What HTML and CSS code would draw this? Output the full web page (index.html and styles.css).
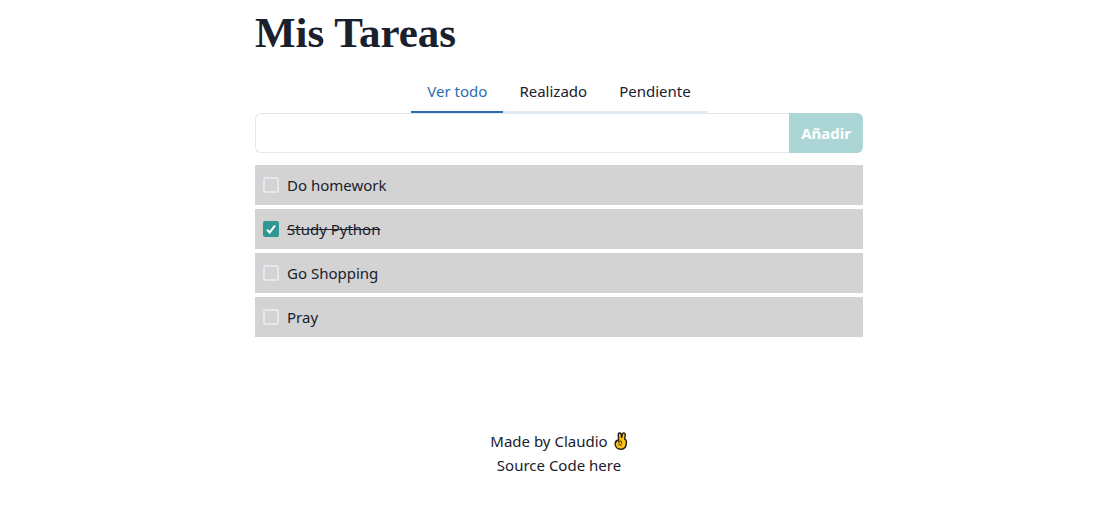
FILE: index.html
```
<!DOCTYPE html>
<html lang="es">
<head>
<meta charset="utf-8">
<meta name="viewport" content="width=device-width, initial-scale=1">
<title>Mis Tareas</title>
<link rel="stylesheet" href="styles.css">
</head>
<body>
<main class="container">
  <h1 class="title">Mis Tareas</h1>
  <div class="tabs" role="tablist">
    <button class="tab tab-active" type="button" role="tab" aria-selected="true">Ver todo</button>
    <button class="tab" type="button" role="tab" aria-selected="false">Realizado</button>
    <button class="tab" type="button" role="tab" aria-selected="false">Pendiente</button>
  </div>
  <form class="add-form">
    <input class="add-input" type="text" aria-label="Nueva tarea">
    <button class="add-button" type="submit" disabled>Añadir</button>
  </form>
  <ul class="tasks">
    <li><label class="task"><input class="check" type="checkbox"><span class="task-text">Do homework</span></label></li>
    <li><label class="task"><input class="check" type="checkbox" checked><span class="task-text">Study Python</span></label></li>
    <li><label class="task"><input class="check" type="checkbox"><span class="task-text">Go Shopping</span></label></li>
    <li><label class="task"><input class="check" type="checkbox"><span class="task-text">Pray</span></label></li>
  </ul>
  <footer class="footer">
    <p class="credit">Made by Claudio
      <svg class="hand" viewBox="0 0 14 18" role="img" aria-label="Victory hand">
        <path d="M4.6 8 4.3 2.6C4.2.6 6.9.4 7.2 2.3l.5 3.2.6-3.4C8.7.3 11.4.6 11.2 2.6l-.4 4.6c1.2.5 1.7 1.5 1.6 3.2-.1 4-1.5 6.8-5.4 6.8-3.6 0-5.8-2-5.8-5.2C1.200 9.600 2.500 8.200 4.600 8Z" fill="#fcc21b" stroke="#201a12" stroke-width="1.4" stroke-linejoin="round"/>
        <path d="M2 10.500c.3-2 2.400-2.400 2.900-.6l.2 1.300M5 9.700c.5-1.500 2.500-1.300 2.600.3l-.1 1.500M4.500 13c1.300-.8 2.500-.4 3 .6" fill="none" stroke="#201a12" stroke-width=".8" stroke-linecap="round"/>
      </svg>
    </p>
    <a class="source" href="#">Source Code here</a>
  </footer>
</main>
</body>
</html>
```
FILE: styles.css
```
* {
  box-sizing: border-box;
}

body {
  margin: 0;
  padding-right: 1px;
  background: #fff;
  color: #1a202c;
  font-family: "Noto Sans", "Open Sans", sans-serif;
  font-size: 15px;
  line-height: 24px;
}

button,
input {
  font: inherit;
}

.container {
  max-width: 640px;
  margin: 0 auto;
  padding: 9px 16px 0;
}

.title {
  margin: 0;
  font: bold 43px/48px "Liberation Serif", serif;
}

.tabs {
  display: flex;
  justify-content: center;
  margin-top: 14px;
}

.tab {
  padding: 8px 16px;
  border: 0;
  border-bottom: 2px solid #e2e8f0;
  background: none;
  color: inherit;
}

.tab-active {
  border-color: #2b6cb0;
  color: #2b6cb0;
}

.add-form {
  display: flex;
}

.add-input {
  flex: 1;
  min-width: 0;
  height: 40px;
  padding: 0 16px;
  border: 1px solid #e2e8f0;
  border-right: 0;
  border-radius: 6px 0 0 6px;
  background: #fff;
}

.add-button {
  height: 40px;
  padding: 0 12px;
  border: 0;
  border-radius: 0 6px 6px 0;
  background: #acd5d5;
  color: #fff;
  font-weight: 700;
}

.tasks {
  display: grid;
  gap: 4px;
  margin: 12px 0 0;
  padding: 0;
  list-style: none;
}

.task {
  display: flex;
  align-items: center;
  gap: 8px;
  padding: 8px;
  background: #d3d3d3;
}

.check {
  appearance: none;
  width: 16px;
  height: 16px;
  margin: 0;
  border: 2px solid #e2e8f0;
  border-radius: 2px;
}

.check:checked {
  border-color: #319795;
  background: #319795 url("data:image/svg+xml,%3Csvg xmlns='http://www.w3.org/2000/svg' viewBox='0 0 12 12'%3E%3Cpath d='M2 6.8 4.7 9.4 10 2.6' fill='none' stroke='white' stroke-width='2'/%3E%3C/svg%3E") center / 12px no-repeat;
}

.check:checked + .task-text {
  text-decoration: line-through;
}

.footer {
  margin-top: 92px;
  padding-bottom: 40px;
  text-align: center;
}

.credit {
  display: flex;
  align-items: center;
  justify-content: center;
  gap: 6px;
  margin: 0;
}

.hand {
  width: 14px;
  height: 18px;
}

.source {
  color: inherit;
  text-decoration: none;
}
```
